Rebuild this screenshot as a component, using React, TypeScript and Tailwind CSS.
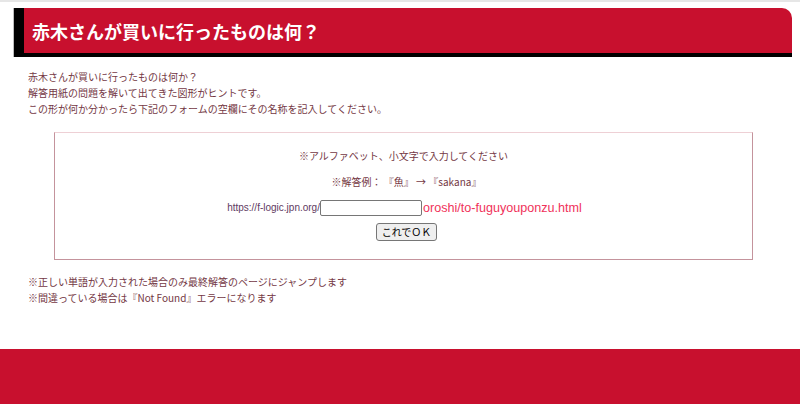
import React from "react";

const jp = { fontFamily: '"Noto Sans CJK JP", "Noto Sans", sans-serif' };
const latin = { fontFamily: '"Liberation Sans", Arial, "Noto Sans CJK JP", sans-serif' };

export default function App() {
  return (
    <div className="w-[800px] h-[404px] bg-white flex flex-col overflow-hidden" style={jp}>
      <div className="h-[2px] bg-[#e6e6e6]" />
      <div className="ml-[13px] mr-[8px] mt-[6px] border-l border-[#bdbdbd]">
        <div className="h-[49px] border-l-[10px] border-b-[4px] border-black bg-[#c8102e] rounded-tr-[10px] flex items-center pl-[8px]">
          <h1 className="text-white text-[18px] font-bold leading-none">
            赤木さんが買いに行ったものは何？
          </h1>
        </div>
      </div>

      <div className="mt-[12px] pl-[28px] text-[10px] leading-[16px] text-[#743844]">
        <p>赤木さんが買いに行ったものは何か？</p>
        <p>解答用紙の問題を解いて出てきた図形がヒントです。</p>
        <p>この形が何か分かったら下記のフォームの空欄にその名称を記入してください。</p>
      </div>

      <div className="mt-[15px] ml-[54px] w-[699px] h-[128px] border border-[#c4939c] border-t-[#eed0d5] flex flex-col items-center pt-[15px] text-[10px] leading-[16px] text-[#743844]">
        <p>※アルファベット、小文字で入力してください</p>
        <p className="mt-[10px] pl-[6px]">※解答例： 『魚』 → 『sakana』</p>
        <div className="mt-[10px] flex items-center h-[16px] pl-[2px]">
          <span className="text-[10px] text-[#5f3a62]" style={latin}>https://f-logic.jpn.org/</span>
          <input
            type="text"
            className="w-[102px] h-[16px] border border-[#767676] rounded-[2px] bg-white outline-none"
          />
          <span className="text-[12.6px] text-[#f0325a] ml-[1px]" style={latin}>oroshi/to-fuguyouponzu.html</span>
        </div>
        <button
          type="button"
          className="mt-[7px] ml-[6px] h-[18px] px-[5px] bg-[#efefef] border border-[#767676] rounded-[3px] text-[10px] leading-none text-black"
        >
          これでＯＫ
        </button>
      </div>

      <div className="mt-[14px] pl-[28px] text-[10px] leading-[16px] text-[#743844]">
        <p>※正しい単語が入力された場合のみ最終解答のページにジャンプします</p>
        <p>※間違っている場合は『Not Found』エラーになります</p>
      </div>

      <div className="mt-auto h-[55px] bg-[#c8102e]" />
    </div>
  );
}
